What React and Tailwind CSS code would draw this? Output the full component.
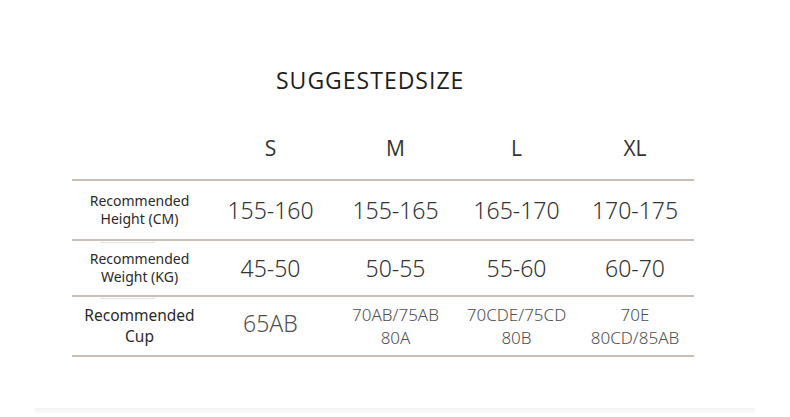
const sizes = ["S", "M", "L", "XL"];

const rows = [
  {
    label: ["Recommended", "Height (CM)"],
    labelClass: "text-[14px] leading-[18px]",
    h: "h-[60px]",
    values: [["155-160"], ["155-165"], ["165-170"], ["170-175"]],
    valueClass: "text-[23px] text-[#333]",
  },
  {
    label: ["Recommended", "Weight (KG)"],
    labelClass: "text-[14px] leading-[18px]",
    h: "h-[56px]",
    values: [["45-50"], ["50-55"], ["55-60"], ["60-70"]],
    valueClass: "text-[23px] text-[#333]",
  },
  {
    label: ["Recommended", "Cup"],
    labelClass: "text-[15.5px] leading-[21px]",
    h: "h-[60px]",
    values: [["65AB"], ["70AB/75AB", "80A"], ["70CDE/75CD", "80B"], ["70E", "80CD/85AB"]],
    valueClass: "text-[#505050]",
  },
];

const cols = "grid grid-cols-[135px_127px_123px_119px_118px]";

export default function App() {
  return (
    <div
      className="w-[790px] h-[417px] bg-white overflow-hidden"
      style={{ fontFamily: '"Noto Sans", "Open Sans", sans-serif' }}
    >
      <div
        className="pt-[62px] pl-[276px] text-[23px] leading-[36px] text-[#1e1e1e] tracking-[1px]"
        style={{ fontFamily: '"Open Sans", "Noto Sans", sans-serif' }}
      >
        SUGGESTEDSIZE
      </div>

      <div className="ml-[72px] w-[622px] mt-[33px]">
        <div className={`${cols} h-[48px] pt-[2px] items-start`}>
          <div />
          {sizes.map((s) => (
            <div
              key={s}
              className="text-center text-[21px] leading-[30px] text-[#333]"
              style={{ fontFamily: '"Open Sans", "Noto Sans", sans-serif' }}
            >
              {s}
            </div>
          ))}
        </div>

        <div className="border-t-2 border-[#cbbfb5]">
          {rows.map((row, i) => (
            <div key={i} className={`${cols} ${row.h} items-center border-b-2 border-[#cbbfb5] relative`}>
              <div className={`text-center text-[#2a2a2a] ${row.labelClass}`}>
                {row.label.map((l) => (
                  <div key={l}>{l}</div>
                ))}
              </div>
              {row.values.map((v, j) => (
                <div
                  key={j}
                  className={`text-center font-light ${
                    v.length > 1 ? "text-[17px] leading-[23px]" : ""
                  } ${row.valueClass} ${v.length === 1 && i === 2 ? "text-[23px] -mt-[6px]" : ""} ${
                    i === 1 && j === 3 ? "text-[#4a4a4a]" : ""
                  }`}
                >
                  {v.map((t) => (
                    <div key={t}>{t}</div>
                  ))}
                </div>
              ))}
              {i < 2 && (
                <div className="absolute left-[28px] bottom-[-4px] w-[55px] h-[1px] bg-[#e6e0da]" />
              )}
            </div>
          ))}
        </div>
      </div>

      <div className="mt-[51px] mx-[35px] h-[5px] bg-gradient-to-b from-[#f3f3f3] to-[#fafafa]" />
    </div>
  );
}
